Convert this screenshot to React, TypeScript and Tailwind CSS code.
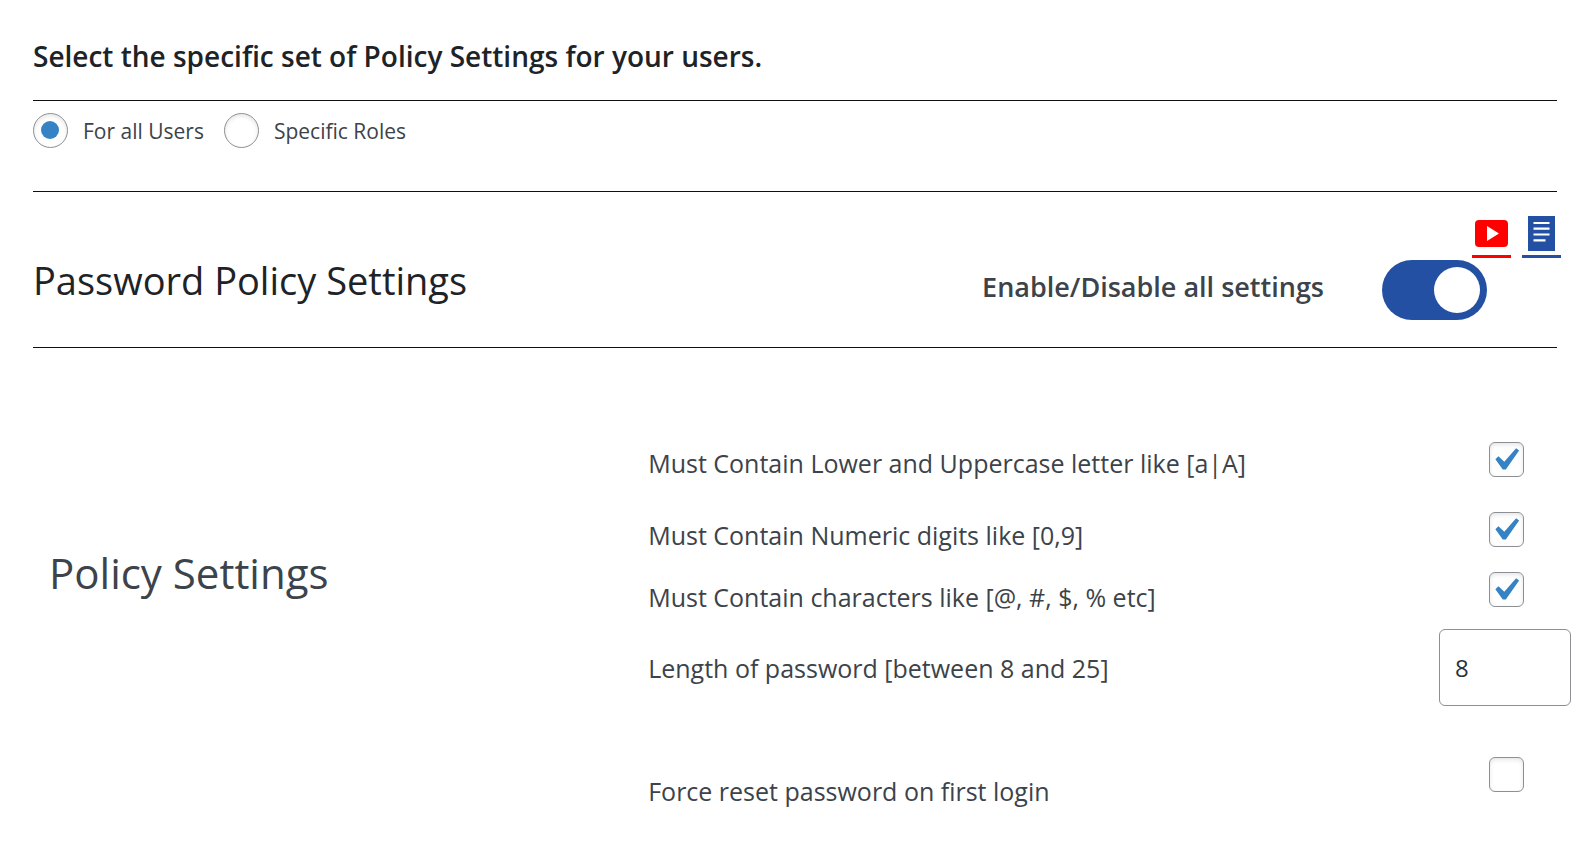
import React, { useState } from 'react';

const RULES = [
  { id: 'letters', label: 'Must Contain Lower and Uppercase letter like [a|A]', row: 'h-[70px]', text: 'pt-[3px]' },
  { id: 'digits', label: 'Must Contain Numeric digits like [0,9]', row: 'h-[60px]', text: 'pt-[5px]' },
  { id: 'symbols', label: 'Must Contain characters like [@, #, $, % etc]', row: 'h-[57px]', text: 'pt-[7px]' },
];

type CheckboxProps = {
  id: string;
  defaultChecked?: boolean;
};

const Checkbox: React.FC<CheckboxProps> = ({ id, defaultChecked }) => (
  <span className="grid size-[35px] shrink-0">
    <input
      id={id}
      type="checkbox"
      defaultChecked={defaultChecked}
      className="peer col-start-1 row-start-1 size-[35px] appearance-none rounded-md border border-[#8c8f94] bg-white shadow-[inset_0_2px_4px_rgba(0,0,0,0.1)]"
    />
    <svg
      viewBox="3 2.15 15.3 15.3"
      className="pointer-events-none invisible col-start-1 row-start-1 size-[35px] peer-checked:visible"
      aria-hidden="true"
    >
      <path d="M14.83 4.89l1.34.94-5.81 8.38H9.02L5.78 9.67l1.34-1.25 2.57 2.4z" fill="#3582c4" />
    </svg>
  </span>
);

type RadioProps = {
  id: string;
  label: string;
  checked: boolean;
  onChange: () => void;
};

const Radio: React.FC<RadioProps> = ({ id, label, checked, onChange }) => (
  <div className="flex items-start gap-[15px]">
    <input
      id={id}
      type="radio"
      name="scope"
      checked={checked}
      onChange={onChange}
      className="grid size-[35px] shrink-0 appearance-none place-items-center rounded-full border border-[#8c8f94] bg-white pb-px pr-px shadow-[inset_0_2px_4px_rgba(0,0,0,0.1)] checked:before:size-[18px] checked:before:rounded-full checked:before:bg-[#3582c4]"
    />
    <label htmlFor={id} className="text-[21px] leading-9">{label}</label>
  </div>
);

const App: React.FC = () => {
  const [scope, setScope] = useState('all');

  return (
    <main className="bg-white pb-8 pl-[33px] pr-[25px] pt-9 font-['Open_Sans','Noto_Sans',sans-serif] text-[#3c434a]">
      <div className="mr-[14px]">
        <h3 className="border-b border-[#101010] pb-6 text-[28px] font-semibold leading-10 text-[#1d2327]">
          Select the specific set of Policy Settings for your users.
        </h3>

        <div className="flex h-[91px] gap-5 border-b border-[#101010] pt-3">
          <Radio id="scope-all" label="For all Users" checked={scope === 'all'} onChange={() => setScope('all')} />
          <Radio id="scope-roles" label="Specific Roles" checked={scope === 'roles'} onChange={() => setScope('roles')} />
        </div>

        {/* Section header */}
        <div className="flex h-[156px] items-start border-b border-[#101010]">
          <h2 className="flex-1 pt-[60px] text-[38px] leading-[56px] text-[#1d2327]">Password Policy Settings</h2>
          <label htmlFor="enable-all" className="pt-[77px] text-[27px] font-semibold leading-9">
            Enable/Disable all settings
          </label>
          <input
            id="enable-all"
            type="checkbox"
            role="switch"
            defaultChecked
            className="ml-[58px] mt-[68px] flex h-[60px] w-[105px] shrink-0 appearance-none items-center rounded-full bg-[#ccc] px-[7px] before:size-[46px] before:rounded-full before:bg-white checked:justify-end checked:bg-[#2350a2]"
          />
          <div className="-ml-[15px] -mr-1 flex gap-[11px] pt-6">
            <a href="#video" aria-label="Video guide" className="flex h-[42px] w-[39px] justify-center border-b-[3px] border-[#f00]">
              <svg width="33" height="35" viewBox="0 0 33 35" aria-hidden="true">
                <rect y="4" width="33" height="27" rx="4" fill="#f00" />
                <path d="M12 10v15l12-7.500z" fill="#fff" />
              </svg>
            </a>
            <a href="#docs" aria-label="Documentation" className="flex h-[42px] w-[39px] justify-center border-b-[3px] border-[#2350a2]">
              <svg width="27" height="35" viewBox="0 0 27 35" aria-hidden="true">
                <path d="M0 0h27v35H0z" fill="#2350a2" />
                <path d="M5.500 7h16M5.500 12.700h16M5.500 18.500h16M5.500 24.300h12" stroke="#fff" strokeWidth="2.200" />
              </svg>
            </a>
          </div>
        </div>
      </div>

      {/* Policy rules */}
      <section className="flex pt-[94px]">
        <h2 className="w-2/5 pl-4 pt-[101px] text-[42px] leading-[60px]">Policy Settings</h2>
        <div className="flex-1 text-[25px] leading-9">
          {RULES.map(rule => (
            <div key={rule.id} className={`flex items-start justify-between ${rule.row}`}>
              <label htmlFor={rule.id} className={rule.text}>{rule.label}</label>
              <div className="flex w-[130px] justify-center">
                <Checkbox id={rule.id} defaultChecked />
              </div>
            </div>
          ))}
          <div className="flex h-32 items-start justify-between">
            <label htmlFor="length" className="pt-[21px]">Length of password [between 8 and 25]</label>
            <input
              id="length"
              type="text"
              inputMode="numeric"
              defaultValue="8"
              className="h-[77px] w-[132px] rounded-md border border-[#8c8f94] bg-white px-[15px] text-[24px] text-[#2c3338]"
            />
          </div>
          <div className="flex items-start justify-between">
            <label htmlFor="force-reset" className="pt-4">Force reset password on first login</label>
            <div className="flex w-[130px] justify-center">
              <Checkbox id="force-reset" />
            </div>
          </div>
        </div>
      </section>
    </main>
  );
};

export default App;
